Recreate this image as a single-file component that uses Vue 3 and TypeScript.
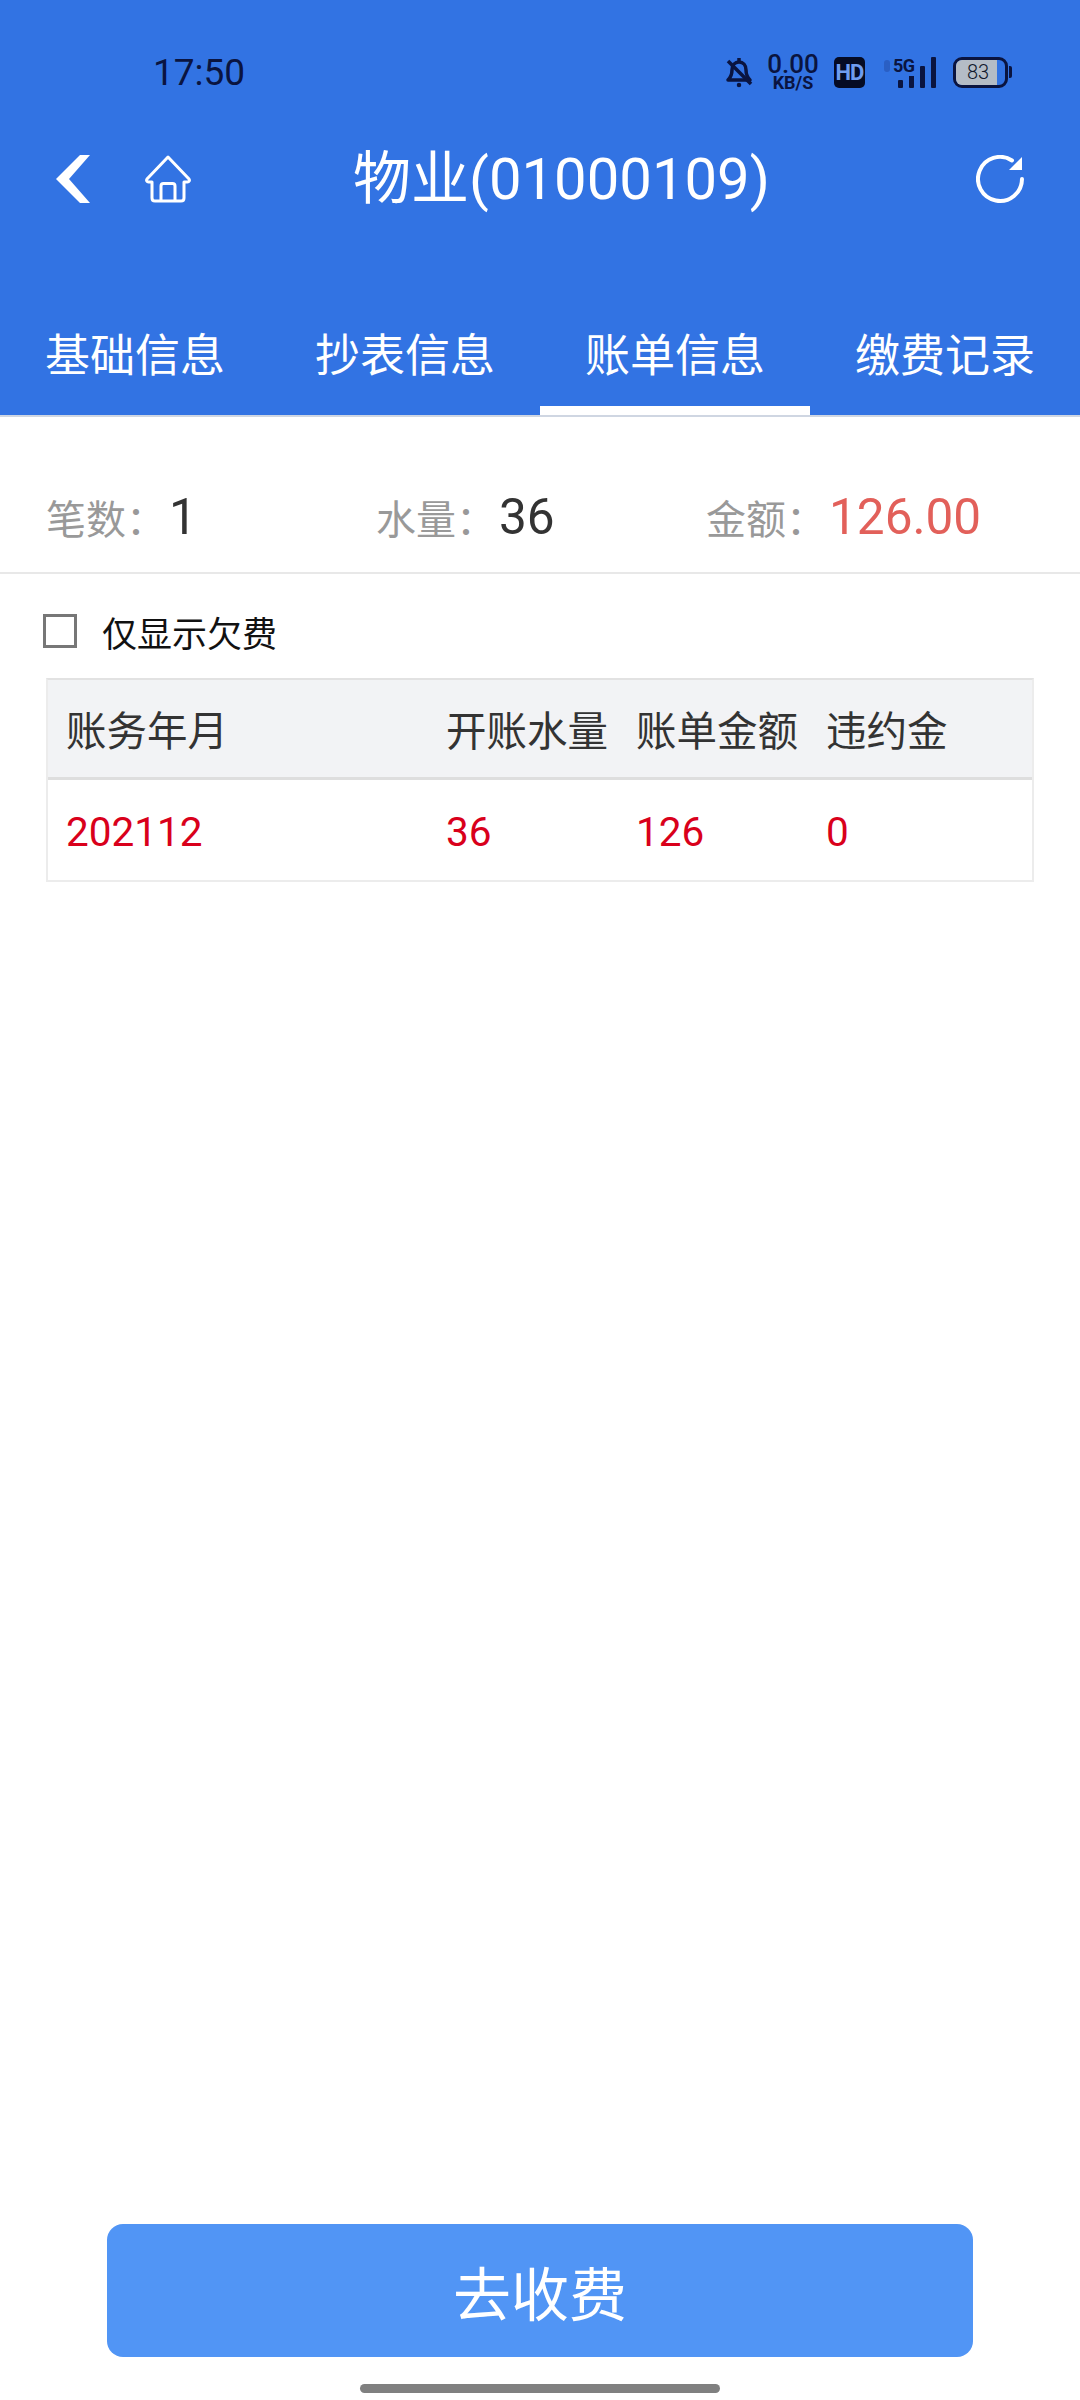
<script setup lang="ts">
const tabs = ['基础信息', '抄表信息', '账单信息', '缴费记录']
const activeTab = 2

const columns = ['账务年月', '开账水量', '账单金额', '违约金']
const rows = [['202112', '36', '126', '0']]
</script>

<template>
  <div class="page">
    <header class="header">
      <div class="status-bar">
        <span class="time">17:50</span>
        <div class="status-icons">
          <svg class="bell" width="28" height="32" viewBox="0 0 28 32" fill="none" stroke="#0a1440" stroke-width="3.500">
            <path d="M3 24c3-3 4-5 4-10 0-5 3-8 7-8s7 3 7 8c0 5 1 7 4 10z" stroke-linejoin="round" />
            <path d="M14 2v4" />
            <path d="M3 5l23 23" />
            <circle cx="14" cy="29" r="1.5" fill="#0a1440" stroke-width="1.5" />
          </svg>
          <div class="speed">
            <span class="speed-num">0.00</span>
            <span class="speed-unit">KB/S</span>
          </div>
          <span class="hd">HD</span>
          <div class="signal">
            <span class="dot"></span>
            <span class="five-g">5G</span>
            <svg width="38" height="31" viewBox="0 0 38 31" fill="#0a1440">
              <rect x="0" y="23" width="5" height="8" rx="1" />
              <rect x="11" y="17" width="5" height="14" rx="1" />
              <rect x="22" y="9" width="5" height="22" rx="1" />
              <rect x="33" y="0" width="5" height="31" rx="1" />
            </svg>
          </div>
          <div class="battery">
            <div class="battery-body">
              <div class="battery-fill"></div>
              <span class="battery-num">83</span>
            </div>
            <span class="battery-nub"></span>
          </div>
        </div>
      </div>

      <div class="nav">
        <div class="nav-left">
          <svg width="34" height="48" viewBox="0 0 34 48" fill="#fff">
            <path d="M24 0h10L13 24l21 24H24L0 24z" />
          </svg>
          <svg width="46" height="48" viewBox="0 0 46 48" fill="none" stroke="#fff" stroke-width="3" stroke-linejoin="round">
            <path d="M23 2L2 24c-1 1.500 0 3 1.500 3H7v16c0 2 1 3 3 3h26c2 0 3-1 3-3V27h3.500c1.500 0 2.500-1.500 1.500-3z" />
            <path d="M16 46V31c0-1.500 1-2.500 2.500-2.500h9c1.500 0 2.500 1 2.500 2.500v15" />
          </svg>
        </div>
        <h1 class="title">物业(01000109)</h1>
        <svg class="refresh" width="48" height="48" viewBox="0 0 48 48" fill="none" stroke="#fff" stroke-width="4">
          <path d="M46 24A22 22 0 1 1 36 5.500" stroke-linecap="round" />
          <path d="M33 15h13V2z" fill="#fff" stroke="none" />
        </svg>
      </div>

      <nav class="tabs">
        <div
          v-for="(tab, i) in tabs"
          :key="tab"
          class="tab"
          :class="{ active: i === activeTab }"
        >
          {{ tab }}
        </div>
      </nav>
    </header>

    <section class="summary">
      <div class="stat">
        <span class="stat-label">笔数：</span>
        <span class="stat-value">1</span>
      </div>
      <div class="stat">
        <span class="stat-label">水量：</span>
        <span class="stat-value">36</span>
      </div>
      <div class="stat">
        <span class="stat-label">金额：</span>
        <span class="stat-value money">126.00</span>
      </div>
    </section>

    <label class="filter">
      <span class="checkbox"></span>
      <span>仅显示欠费</span>
    </label>

    <div class="table">
      <div class="table-row table-head">
        <div v-for="col in columns" :key="col" class="cell">{{ col }}</div>
      </div>
      <div v-for="row in rows" :key="row[0]" class="table-row table-body">
        <div v-for="(val, i) in row" :key="i" class="cell">{{ val }}</div>
      </div>
    </div>

    <footer class="footer">
      <button class="pay-btn">去收费</button>
      <div class="home-bar"></div>
    </footer>
  </div>
</template>

<style scoped>
.page {
  width: 1080px;
  height: 2400px;
  display: flex;
  flex-direction: column;
  background: #fff;
  font-family: Roboto, "Noto Sans CJK SC", sans-serif;
  overflow: hidden;
}

.header {
  background: #3273e3;
  color: #fff;
  flex: none;
}

.status-bar {
  height: 144px;
  box-sizing: border-box;
  padding: 52px 68px 0 153px;
  display: flex;
  justify-content: space-between;
  align-items: flex-start;
  color: #0a1440;
}

.time {
  font-size: 37px;
  line-height: 42px;
}

.status-icons {
  display: flex;
  align-items: center;
  height: 40px;
}

.bell {
  margin-right: 13px;
}

.speed {
  width: 54px;
  margin-right: 14px;
  display: flex;
  flex-direction: column;
  align-items: center;
  font-weight: 700;
}

.speed-num {
  font-size: 26px;
  line-height: 21px;
  font-weight: 500;
}

.speed-unit {
  font-size: 18px;
  line-height: 15px;
}

.hd {
  width: 31px;
  height: 31px;
  background: #050b24;
  border-radius: 5px;
  color: #6f9cf0;
  font-size: 22px;
  font-weight: 700;
  line-height: 31px;
  text-align: center;
  letter-spacing: -1px;
  margin-right: 19px;
}

.signal {
  position: relative;
  width: 52px;
  height: 31px;
  display: flex;
  justify-content: flex-end;
  margin-right: 17px;
}

.dot {
  position: absolute;
  left: 0;
  top: 3px;
  width: 6px;
  height: 12px;
  border-radius: 3px;
  background: #2a5fc4;
}

.five-g {
  position: absolute;
  left: 9px;
  top: -1px;
  font-size: 18px;
  font-weight: 700;
  line-height: 20px;
  letter-spacing: -0.5px;
  background: #3273e3;
  padding-right: 1px;
}

.battery {
  display: flex;
  align-items: center;
}

.battery-body {
  position: relative;
  width: 55px;
  height: 31px;
  box-sizing: border-box;
  border: 3px solid #0a1440;
  border-radius: 9px;
  overflow: hidden;
}

.battery-fill {
  width: 83%;
  height: 100%;
  background: #b4bcc6;
}

.battery-num {
  position: absolute;
  inset: 0;
  padding-right: 5px;
  text-align: center;
  color: #10182c;
  font-size: 20px;
  font-weight: 300;
  line-height: 25px;
}

.battery-nub {
  width: 3px;
  height: 12px;
  margin-left: 1px;
  background: #0a1440;
  border-radius: 0 2px 2px 0;
}

.nav {
  position: relative;
  height: 70px;
  padding: 0 56px;
  display: flex;
  align-items: center;
  justify-content: space-between;
}

.nav-left {
  display: flex;
  align-items: center;
  gap: 55px;
}

.title {
  position: absolute;
  left: 43px;
  right: 0;
  margin: 0;
  text-align: center;
  font-size: 58px;
  line-height: 70px;
  font-weight: 400;
}

.tabs {
  display: flex;
  height: 115px;
  padding-top: 86px;
}

.tab {
  flex: 1;
  height: 115px;
  box-sizing: border-box;
  padding-top: 26px;
  text-align: center;
  font-size: 45px;
  line-height: 62px;
  border-bottom: 9px solid transparent;
}

.tab.active {
  border-bottom-color: #fff;
}

.summary {
  flex: none;
  height: 159px;
  box-sizing: border-box;
  padding: 45px 0 0 46px;
  border-top: 2px solid #cfd6e2;
  border-bottom: 2px solid #e8e8e8;
  display: flex;
  align-items: center;
}

.stat {
  width: 330px;
  display: flex;
  align-items: center;
}

.stat-label {
  font-size: 40px;
  color: #999;
}

.stat-value {
  margin-left: 3px;
  font-size: 49.5px;
  color: #333;
}

.stat-value.money {
  color: #e2605a;
}

.filter {
  flex: none;
  height: 104px;
  box-sizing: border-box;
  padding: 10px 0 0 43px;
  display: flex;
  align-items: center;
  gap: 25px;
  font-size: 35px;
  color: #111;
}

.checkbox {
  width: 34px;
  height: 34px;
  box-sizing: border-box;
  border: 3px solid #777;
}

.table {
  flex: none;
  margin: 0 46px;
  border: 2px solid #ececec;
  border-top-color: #e2e2e2;
}

.table-row {
  display: grid;
  grid-template-columns: 380px 190px 190px 1fr;
  align-items: center;
}

.table-head {
  height: 97px;
  background: #f2f3f5;
  border-bottom: 3px solid #dedede;
  color: #333;
  font-size: 40.5px;
}

.table-body {
  height: 97px;
  padding-top: 3px;
  color: #d9001b;
  font-size: 40.5px;
}

.cell {
  padding-left: 18px;
  white-space: nowrap;
}

.footer {
  margin-top: auto;
  display: flex;
  flex-direction: column;
  align-items: center;
  padding-bottom: 7px;
}

.pay-btn {
  width: 866px;
  height: 133px;
  border: none;
  border-radius: 16px;
  background: #5195f5;
  color: #fff;
  font-family: inherit;
  font-size: 58px;
}

.home-bar {
  width: 360px;
  height: 9px;
  margin-top: 27px;
  border-radius: 5px;
  background: #808080;
}
</style>
